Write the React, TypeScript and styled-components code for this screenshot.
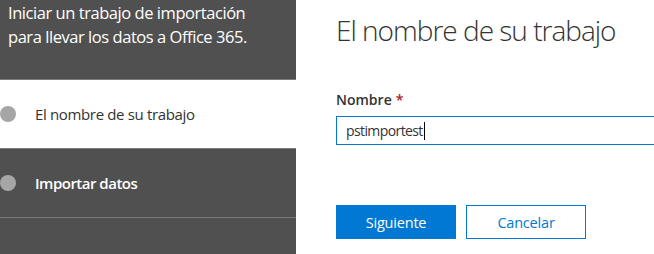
import React from "react";
import styled, { createGlobalStyle } from "styled-components";

const Global = createGlobalStyle`
  html, body { margin: 0; padding: 0; background: #ffffff; overflow: hidden; }
  body { font-family: "Open Sans", "Noto Sans", sans-serif; }
`;

const Page = styled.div`
  display: flex;
  width: 654px;
  height: 254px;
  overflow: hidden;
`;

const Sidebar = styled.aside`
  width: 296px;
  flex: none;
  background: #505050;
  display: flex;
  flex-direction: column;
`;

const Intro = styled.div`
  height: 79px;
  box-sizing: border-box;
  padding: 1px 0 0 8px;
  color: #ffffff;
  font-size: 16.5px;
  letter-spacing: -0.45px;
  line-height: 24px;
`;

const Step = styled.div<{ $active?: boolean }>`
  height: 69px;
  box-sizing: border-box;
  border-top: 1px solid #7a7a7a;
  display: flex;
  align-items: center;
  gap: 19px;
  background: ${(p) => (p.$active ? "#ffffff" : "#505050")};
  color: ${(p) => (p.$active ? "#333333" : "#ffffff")};
  font-weight: ${(p) => (p.$active ? 400 : 600)};
  letter-spacing: ${(p) => (p.$active ? "-0.35px" : "-0.5px")};
  font-size: 15px;
`;

const Dot = styled.span`
  width: 16px;
  height: 16px;
  border-radius: 50%;
  background: #a6a6a6;
  flex: none;
`;

const Divider = styled.div`
  border-top: 1px solid #7a7a7a;
`;

const Main = styled.main`
  flex: 1;
  padding-left: 40px;
  display: flex;
  flex-direction: column;
  overflow: hidden;
`;

const Title = styled.h1`
  margin: 12px 0 0;
  font-size: 28px;
  font-weight: 300;
  letter-spacing: -1px;
  line-height: 36px;
  color: #333333;
`;

const Label = styled.label`
  margin-top: 42px;
  font-size: 14px;
  font-weight: 600;
  line-height: 20px;
  color: #333333;
`;

const Required = styled.span`
  color: #a4262c;
  margin-left: 4px;
`;

const InputBox = styled.div`
  margin-top: 6px;
  width: 360px;
  height: 29px;
  box-sizing: border-box;
  border: 1px solid #0078d4;
  padding-left: 9px;
  display: flex;
  align-items: center;
  font-size: 14px;
  letter-spacing: -0.6px;
  color: #333333;
`;

const Caret = styled.span`
  display: inline-block;
  width: 1px;
  height: 18px;
  margin-left: 1px;
  background: #000000;
`;

const Actions = styled.div`
  margin-top: 60px;
  display: flex;
  gap: 10px;
`;

const Button = styled.button<{ $primary?: boolean }>`
  width: 120px;
  height: 34px;
  box-sizing: border-box;
  border: 1px solid #0078d4;
  background: ${(p) => (p.$primary ? "#0078d4" : "#ffffff")};
  color: ${(p) => (p.$primary ? "#ffffff" : "#0078d4")};
  font-family: "Open Sans", sans-serif;
  font-size: 14.5px;
  letter-spacing: -0.2px;
  padding: 0;
  cursor: pointer;
`;

export default function App() {
  return (
    <>
      <Global />
      <Page>
        <Sidebar>
          <Intro>
            Iniciar un trabajo de importación
            <br />
            para llevar los datos a Office 365.
          </Intro>
          <Step $active>
            <Dot />
            El nombre de su trabajo
          </Step>
          <Step>
            <Dot />
            Importar datos
          </Step>
          <Divider />
        </Sidebar>
        <Main>
          <Title>El nombre de su trabajo</Title>
          <Label>
            Nombre<Required>*</Required>
          </Label>
          <InputBox>
            pstimportest
            <Caret />
          </InputBox>
          <Actions>
            <Button $primary>Siguiente</Button>
            <Button>Cancelar</Button>
          </Actions>
        </Main>
      </Page>
    </>
  );
}
